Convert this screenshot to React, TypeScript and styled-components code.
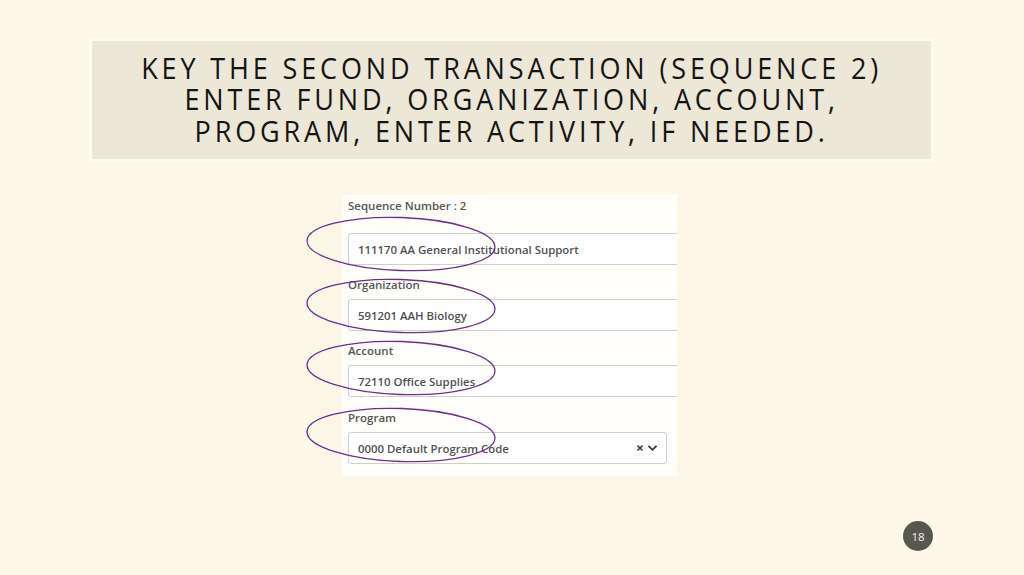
import styled, { createGlobalStyle } from 'styled-components';

const GlobalStyle = createGlobalStyle`
    html, body {
        margin: 0;
        padding: 0;
        background: #fdf7e7;
    }
    * {
        box-sizing: border-box;
    }
`;

const Slide = styled.div`
    width: 1024px;
    height: 575px;
    background: #fdf7e7;
    display: flex;
    flex-direction: column;
    font-family: 'Open Sans', 'Noto Sans', sans-serif;
    overflow: hidden;
`;

const TitleBox = styled.div`
    margin: 38px 0 0 89px;
    width: 845px;
    height: 124px;
    border: 3px solid #fffcf3;
    background: #ede7d7;
    display: flex;
    align-items: center;
    justify-content: center;
`;

const Title = styled.h1`
    margin: 0 0 2px;
    font-weight: 400;
    font-size: 30px;
    line-height: 31.5px;
    letter-spacing: 4.3px;
    color: #141414;
    text-align: center;
    white-space: nowrap;
    transform: scaleX(0.9);
`;

const Figure = styled.div`
    position: relative;
    margin: 33px 0 0 342px;
    width: 335px;
    height: 281px;
`;

const Panel = styled.div`
    width: 100%;
    height: 100%;
    background: #fffefb;
    padding: 1px 0 0 6px;
    overflow: hidden;
    display: flex;
    flex-direction: column;
`;

const Label = styled.div<{ $gap: number }>`
    height: 20px;
    line-height: 20px;
    font-size: 11.5px;
    font-weight: 600;
    color: #555555;
    margin-top: ${(p) => p.$gap}px;
    margin-bottom: 4px;
    white-space: nowrap;
`;

const Field = styled.div<{ $select?: boolean; $top?: number }>`
    height: 32px;
    width: ${(p) => (p.$select ? '319px' : '360px')};
    margin-top: ${(p) => p.$top ?? 0}px;
    border: 1px solid #cfcfcf;
    border-right-color: ${(p) => (p.$select ? '#cfcfcf' : 'transparent')};
    border-radius: 3px;
    background: #fff;
    display: flex;
    align-items: center;
    padding: 0 8px 0 9px;
    font-size: 11.4px;
    font-weight: 600;
    color: #505050;
    white-space: nowrap;
`;

const Value = styled.span`
    flex: 1;
`;

const Controls = styled.span`
    display: flex;
    align-items: center;
    gap: 3px;
    color: #333;
`;

const Marks = styled.svg`
    position: absolute;
    left: -40px;
    top: 20px;
    width: 210px;
    height: 260px;
    pointer-events: none;
`;

const Footer = styled.div`
    flex: 1;
    display: flex;
    justify-content: flex-end;
    align-items: flex-end;
    padding: 0 91px 24px 0;
`;

const PageNumber = styled.div`
    width: 30px;
    height: 30px;
    border-radius: 50%;
    background: #57564f;
    color: #f4f4f0;
    font-size: 11.5px;
    display: flex;
    align-items: center;
    justify-content: center;
`;

const ellipses = [29, 91, 153, 220];

export default function App() {
    return (
        <>
            <GlobalStyle />
            <Slide>
                <TitleBox>
                    <Title>
                        KEY THE SECOND TRANSACTION (SEQUENCE 2)
                        <br />
                        ENTER FUND, ORGANIZATION, ACCOUNT,
                        <br />
                        PROGRAM, ENTER ACTIVITY, IF NEEDED.
                    </Title>
                </TitleBox>

                <Figure>
                    <Panel>
                        <Label $gap={0}>Sequence Number : 2</Label>
                        <Field $top={13}>111170 AA General Institutional Support</Field>
                        <Label $gap={10}>Organization</Label>
                        <Field>591201 AAH Biology</Field>
                        <Label $gap={10}>Account</Label>
                        <Field>72110 Office Supplies</Field>
                        <Label $gap={11}>Program</Label>
                        <Field $select>
                            <Value>0000 Default Program Code</Value>
                            <Controls>
                                <svg width="8" height="8" viewBox="0 0 8 8">
                                    <path d="M1.5 1.5 L6.5 6.5 M6.5 1.5 L1.5 6.5" stroke="#333" strokeWidth="1.6" />
                                </svg>
                                <svg width="11" height="8" viewBox="0 0 11 8">
                                    <path d="M1.5 1.8 L5.5 5.8 L9.5 1.8" stroke="#333" strokeWidth="1.8" fill="none" />
                                </svg>
                            </Controls>
                        </Field>
                    </Panel>
                    <Marks viewBox="0 0 210 260">
                        {ellipses.map((cy) => (
                            <ellipse
                                key={cy}
                                cx={99}
                                cy={cy}
                                rx={94}
                                ry={26.5}
                                fill="none"
                                stroke="#6c2d8f"
                                strokeWidth={1.3}
                                transform={`rotate(2 99 ${cy})`}
                            />
                        ))}
                    </Marks>
                </Figure>

                <Footer>
                    <PageNumber>18</PageNumber>
                </Footer>
            </Slide>
        </>
    );
}
